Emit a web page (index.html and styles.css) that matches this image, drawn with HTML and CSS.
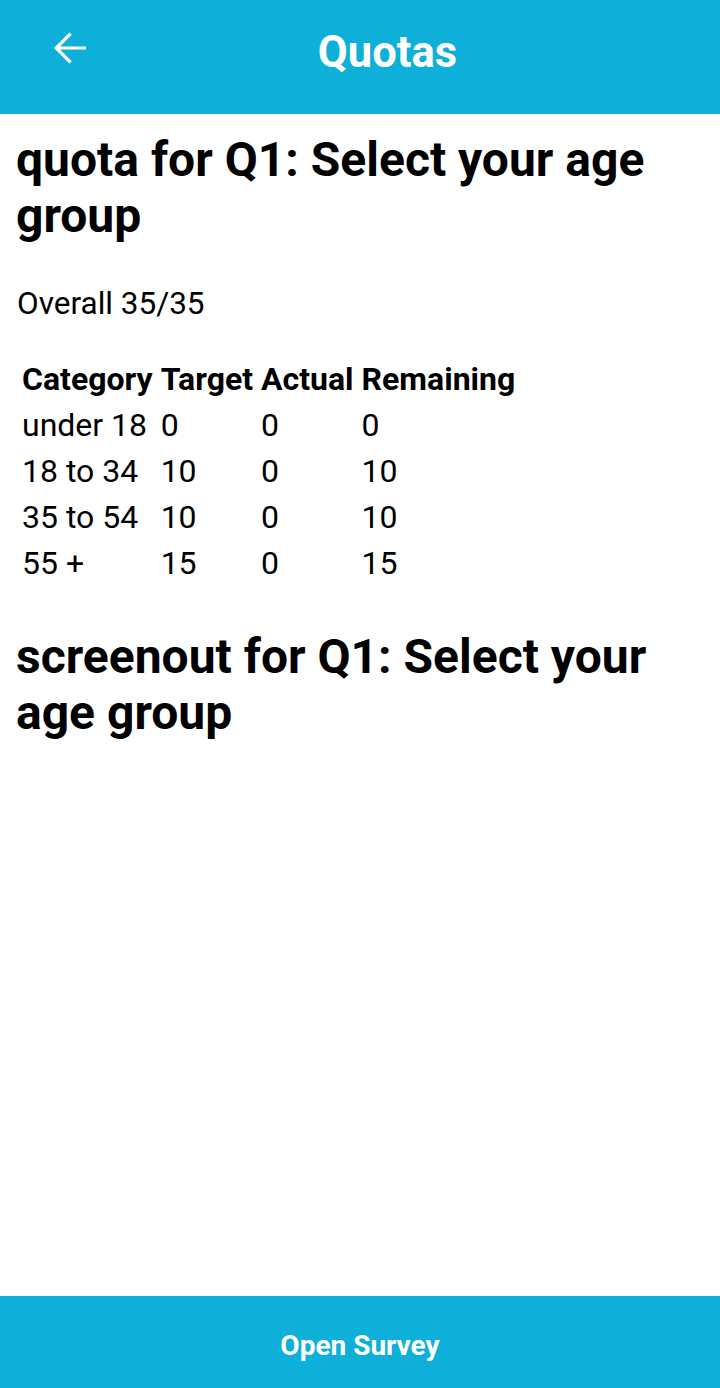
FILE: index.html
```html
<!DOCTYPE html>
<html>
<head>
<meta charset="utf-8">
<link rel="stylesheet" href="styles.css">
</head>
<body>
<div class="app">
  <header class="topbar">
    <button class="back" aria-label="Back">
      <svg width="48" height="48" viewBox="0 0 24 24"><path d="M20 12H5.6M12.3 4.8L5.1 12l7.2 7.2" fill="none" stroke="#fff" stroke-width="1.6"/></svg>
    </button>
    <h1 class="title">Quotas</h1>
  </header>
  <main class="content">
    <h2 class="heading">quota for Q1: Select your age group</h2>
    <p class="overall">Overall 35/35</p>
    <table class="quota">
      <thead>
        <tr><th>Category</th><th>Target</th><th>Actual</th><th>Remaining</th></tr>
      </thead>
      <tbody>
        <tr><td>under 18</td><td>0</td><td>0</td><td>0</td></tr>
        <tr><td>18 to 34</td><td>10</td><td>0</td><td>10</td></tr>
        <tr><td>35 to 54</td><td>10</td><td>0</td><td>10</td></tr>
        <tr><td>55 +</td><td>15</td><td>0</td><td>15</td></tr>
      </tbody>
    </table>
    <h2 class="heading second">screenout for Q1: Select your age group</h2>
  </main>
  <footer class="footer">
    <button class="open">Open Survey</button>
  </footer>
</div>
</body>
</html>
```
FILE: styles.css
```css
* { box-sizing: border-box; }
html, body { margin: 0; padding: 0; }
body {
  font-family: Roboto, "Noto Sans", "Liberation Sans", sans-serif;
  color: #000;
  background: #fff;
}
.app {
  min-height: 100vh;
  display: flex;
  flex-direction: column;
}
.topbar {
  height: 114px;
  background: #0eb0da;
  display: flex;
  align-items: center;
  justify-content: center;
  padding-left: 55px;
  position: relative;
}
.back {
  position: absolute;
  left: 46px;
  top: 24px;
  width: 48px;
  height: 48px;
  padding: 0;
  border: 0;
  background: none;
  display: flex;
}
.title {
  margin: 0 0 10px 0;
  color: #fff;
  font-size: 43.5px;
  font-weight: 700;
}
.content {
  flex: 1;
  padding: 18px 16px 0 16px;
}
.heading {
  margin: 0;
  font-size: 48px;
  line-height: 56px;
  font-weight: 700;
}
.overall {
  margin: 41px 0 0 1px;
  font-size: 31.5px;
  line-height: 37px;
}
.quota {
  margin-top: 34px;
  margin-left: 3px;
  border-spacing: 0;
  font-size: 32px;
}
.quota th, .quota td {
  text-align: left;
  padding: 3px 5px 3px 3px;
  line-height: 40px;
}
.quota th { font-weight: 700; }
.second { margin-top: 43px; }
.footer {
  height: 92px;
  background: #0eb0da;
  display: flex;
}
.open {
  flex: 1;
  border: 0;
  padding: 6px 0 0 0;
  background: none;
  color: #fff;
  font-family: inherit;
  font-size: 28px;
  font-weight: 700;
}
```
